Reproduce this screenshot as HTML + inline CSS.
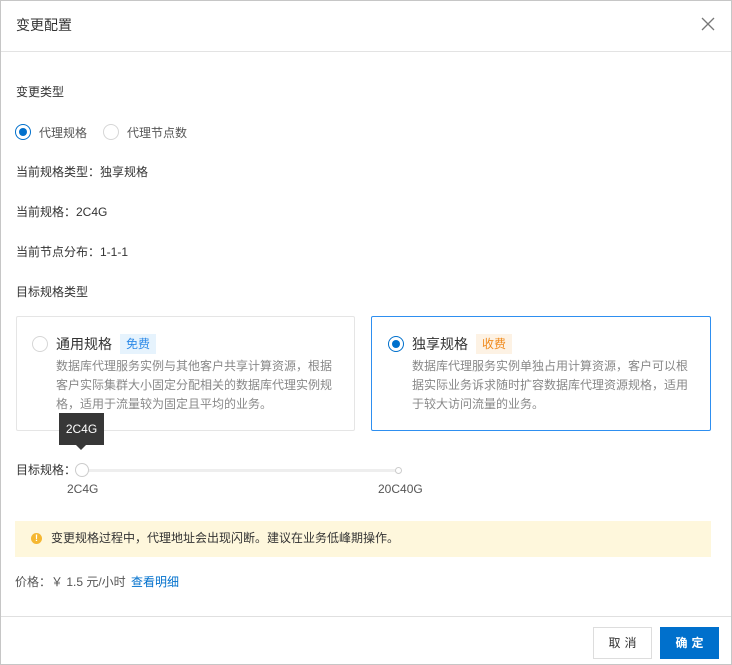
<!DOCTYPE html>
<html><head><meta charset="utf-8"><style>
*{margin:0;padding:0;box-sizing:border-box}
body{width:732px;height:665px;background:#fff;font-family:"Liberation Sans","Noto Sans CJK SC",sans-serif;font-size:12px;color:#333;position:relative;overflow:hidden}
.frame{position:absolute;left:0;top:0;width:732px;height:665px;border:1px solid #c6c6c6}
.a{position:absolute;white-space:nowrap}
.radio{position:absolute;width:16px;height:16px;border-radius:50%;border:1px solid #d6d6d6;background:#fff}
.radio.on{border-color:#0070cc}
.radio.on::after{content:"";position:absolute;left:3px;top:3px;width:8px;height:8px;border-radius:50%;background:#0070cc}
.card{position:absolute;border:1px solid #e5e5e5;border-radius:2px}
.desc{position:absolute;color:#888;line-height:19px;font-size:12px;white-space:nowrap}
.tag{display:inline-block;font-size:12px;padding:0 6px;height:20px;line-height:20px;margin-left:8px;vertical-align:1px}
</style></head><body>
<div class="frame"></div>
<div class="a" style="left:16px;top:15px;font-size:14px;color:#333;line-height:20px">变更配置</div>
<svg class="a" style="left:701px;top:17px" width="14" height="14" viewBox="0 0 14 14"><path d="M1 1L13 13M13 1L1 13" stroke="#777" stroke-width="1.3"/></svg>
<div class="a" style="left:1px;top:51px;width:730px;height:1px;background:#e3e3e3"></div>

<div class="a" style="left:16px;top:84px;line-height:17px">变更类型</div>
<div class="radio on" style="left:15px;top:124px"></div>
<div class="a" style="left:39px;top:125px;line-height:16px;color:#555">代理规格</div>
<div class="radio" style="left:103px;top:124px"></div>
<div class="a" style="left:127px;top:125px;line-height:16px;color:#555">代理节点数</div>
<div class="a" style="left:16px;top:164px;line-height:17px">当前规格类型：独享规格</div>
<div class="a" style="left:16px;top:204px;line-height:17px">当前规格：2C4G</div>
<div class="a" style="left:16px;top:244px;line-height:17px">当前节点分布：1-1-1</div>
<div class="a" style="left:16px;top:284px;line-height:17px">目标规格类型</div>

<div class="card" style="left:16px;top:316px;width:339px;height:115px"></div>
<div class="radio" style="left:32px;top:336px"></div>
<div class="a" style="left:56px;top:334px;font-size:14px;line-height:20px;color:#333">通用规格<span class="tag" style="background:#e6f3fd;color:#2c8ae8">免费</span></div>
<div class="desc" style="left:56px;top:357px">数据库代理服务实例与其他客户共享计算资源，根据<br>客户实际集群大小固定分配相关的数据库代理实例规<br>格，适用于流量较为固定且平均的业务。</div>

<div class="card" style="left:371px;top:316px;width:340px;height:115px;border-color:#2e8ff0"></div>
<div class="radio on" style="left:388px;top:336px"></div>
<div class="a" style="left:412px;top:334px;font-size:14px;line-height:20px;color:#333">独享规格<span class="tag" style="background:#fdf2e4;color:#f08a1c">收费</span></div>
<div class="desc" style="left:412px;top:357px">数据库代理服务实例单独占用计算资源，客户可以根<br>据实际业务诉求随时扩容数据库代理资源规格，适用<br>于较大访问流量的业务。</div>

<div class="a" style="left:59px;top:413px;width:45px;height:32px;background:#373737;color:#fff;text-align:center;line-height:32px;font-size:12px">2C4G</div>
<div class="a" style="left:76px;top:445px;width:0;height:0;border-left:5px solid transparent;border-right:5px solid transparent;border-top:5px solid #373737"></div>

<div class="a" style="left:16px;top:462px;line-height:17px">目标规格：</div>
<div class="a" style="left:82px;top:469px;width:317px;height:3px;background:#eee;border-radius:2px"></div>
<div class="a" style="left:75px;top:463px;width:14px;height:14px;border-radius:50%;border:1px solid #ccc;background:#fff"></div>
<div class="a" style="left:395px;top:467px;width:7px;height:7px;border-radius:50%;border:1px solid #ccc;background:#fff"></div>
<div class="a" style="left:67px;top:481px;line-height:17px;color:#555">2C4G</div>
<div class="a" style="left:378px;top:481px;line-height:17px;color:#555">20C40G</div>

<div class="a" style="left:15px;top:521px;width:696px;height:36px;background:#fef7dc"></div>
<div class="a" style="left:31px;top:533px;width:11px;height:11px;border-radius:50%;background:#f5b731;color:#fff;font-size:9px;line-height:11px;text-align:center;font-weight:bold">!</div>
<div class="a" style="left:51px;top:530px;line-height:17px;color:#333">变更规格过程中，代理地址会出现闪断。建议在业务低峰期操作。</div>

<div class="a" style="left:15px;top:574px;line-height:17px;color:#555">价格：￥ 1.5 元/小时 <span style="color:#0070cc;margin-left:2px">查看明细</span></div>

<div class="a" style="left:1px;top:616px;width:730px;height:1px;background:#e0e0e0"></div>
<div class="a" style="left:593px;top:627px;width:59px;height:32px;border:1px solid #ddd;background:#fff;text-align:center;line-height:30px;color:#333;letter-spacing:4px;padding-left:4px">取消</div>
<div class="a" style="left:660px;top:627px;width:59px;height:32px;background:#0070cc;color:#fff;text-align:center;line-height:32px;letter-spacing:4px;padding-left:4px;font-weight:bold">确定</div>
</body></html>
